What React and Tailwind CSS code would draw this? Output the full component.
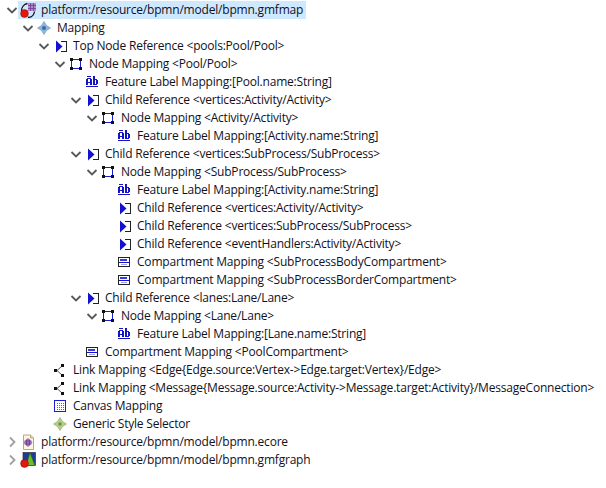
import React from "react";

const Chev = ({ open }) => (
  <svg width="16" height="16" viewBox="0 0 16 16" className="shrink-0" fill="none">
    {open ? (
      <path d="M3.5 6 L8 10.5 L12.5 6" stroke="#585858" strokeWidth="1.8" />
    ) : (
      <path d="M6 3.5 L10.5 8 L6 12.5" stroke="#a0a0a0" strokeWidth="1.8" />
    )}
  </svg>
);

const S = ({ children }) => (
  <svg width="16" height="16" viewBox="0 0 16 16" className="shrink-0" fill="none" shapeRendering="crispEdges">
    {children}
  </svg>
);

const Gmfmap = () => (
  <S>
    <g shapeRendering="geometricPrecision">
      <rect x="8" y="1" width="8" height="8" fill="#b08cc8" />
      <path d="M10.5 1v8M13.5 1v8M8 3.5h8M8 6.5h8" stroke="#7a3fa0" strokeWidth="0.9" />
      <path d="M1.5 9 A7.5 7.5 0 0 1 7.5 1.5" stroke="#111" strokeWidth="1.3" />
      <path d="M14.5 9.5 A7 7 0 0 1 8 15.5" stroke="#111" strokeWidth="1.3" />
      <circle cx="4.5" cy="11.5" r="3.9" fill="#e4170c" stroke="#8a1008" strokeWidth="0.5" />
    </g>
  </S>
);
const Diamond = () => (
  <S>
    <g shapeRendering="geometricPrecision">
      <path d="M8 1.5 L10.5 5.5 L14.5 8 L10.5 10.5 L8 14.5 L5.5 10.5 L1.5 8 L5.5 5.5 Z" fill="#8fb6dc" stroke="#6f94b8" strokeWidth="0.6" />
      <rect x="6.3" y="6.3" width="3.4" height="3.4" fill="#2f68b0" />
    </g>
  </S>
);
const ChildRef = () => (
  <S>
    <path d="M9 3.5h5.5v10h-5.5" stroke="#222" strokeWidth="1" />
    <g shapeRendering="geometricPrecision">
      <path d="M4 2.5 L10.5 8.5 L4 14.5 Z" fill="#1212d0" />
    </g>
  </S>
);
const NodeMap = () => (
  <S>
    <rect x="3.5" y="3.5" width="9" height="9" stroke="#1c1cd0" />
    <rect x="2" y="2" width="3" height="3" fill="#111" />
    <rect x="11" y="2" width="3" height="3" fill="#111" />
    <rect x="2" y="11" width="3" height="3" fill="#111" />
    <rect x="11" y="11" width="3" height="3" fill="#111" />
  </S>
);
const AbIcon = () => (
  <S>
    <g fill="#1414c4">
      <rect x="3" y="2" width="4" height="1" />
      <rect x="3" y="4" width="4" height="1" />
      <rect x="2" y="5" width="2" height="6" />
      <rect x="6" y="5" width="2" height="6" />
      <rect x="4" y="8" width="2" height="1" />
      <rect x="9" y="2" width="2" height="9" />
      <rect x="11" y="5" width="2" height="1" />
      <rect x="11" y="10" width="2" height="1" />
      <rect x="12" y="6" width="2" height="4" />
      <rect x="2" y="12" width="12" height="1" />
    </g>
  </S>
);
const Compartment = () => (
  <S>
    <rect x="2.5" y="3.5" width="11" height="9" stroke="#222" />
    <rect x="3" y="8" width="10" height="1" fill="#1414c8" />
    <rect x="4" y="5" width="7" height="2" fill="#3a3ad8" />
    <rect x="5" y="10" width="6" height="1" fill="#a0a0e0" />
  </S>
);
const LinkIcon = () => (
  <S>
    <g shapeRendering="geometricPrecision">
      <path d="M5 8.5 L10 4 M5 8.5 L10 13" stroke="#555" strokeWidth="1" />
    </g>
    <rect x="9" y="2" width="3" height="3" fill="#111" />
    <rect x="2" y="7" width="3" height="3" fill="#111" />
    <rect x="9" y="12" width="3" height="3" fill="#111" />
  </S>
);
const Canvas = () => (
  <S>
    <rect x="2.5" y="2.5" width="11" height="11" stroke="#1c1cd0" fill="#fff" />
    <path d="M5 5h1M7 5h1M9 5h1M11 5h1M5 7h1M7 7h1M9 7h1M11 7h1M5 9h1M7 9h1M9 9h1M11 9h1M5 11h1M7 11h1M9 11h1M11 11h1" stroke="#666" />
  </S>
);
const Style = () => (
  <S>
    <g shapeRendering="geometricPrecision">
      <path d="M8 1.5 L10.5 5.5 L14.5 8 L10.5 10.5 L8 14.5 L5.5 10.5 L1.5 8 L5.5 5.5 Z" fill="#b4d08c" stroke="#84a85c" strokeWidth="0.6" />
      <rect x="6.5" y="6.5" width="3" height="3" fill="#6f8f3f" />
    </g>
  </S>
);
const Ecore = () => (
  <S>
    <g shapeRendering="geometricPrecision">
      <path d="M3.5 1h7l3 3v11.5h-10z" fill="#fdf6e0" stroke="#b8a878" />
      <path d="M10.5 1v3h3" stroke="#b8a878" fill="#ecdcb0" />
      <path d="M8 4 L12.5 8.5 L8 13 L3.5 8.5 Z" fill="#a070c0" />
      <path d="M6.5 5.5v6M9.5 5.5v6M4.5 7h7M4.5 10h7" stroke="#6d3f90" strokeWidth="0.8" />
    </g>
  </S>
);
const Graph = () => (
  <S>
    <g shapeRendering="geometricPrecision">
      <rect x="3" y="0.5" width="12.5" height="13" fill="#1c3c9c" stroke="#222" strokeWidth="0.6" />
      <path d="M10 0.5 L15 13.5 H6 Z" fill="#6fbb28" stroke="#2c5c10" strokeWidth="0.6" />
      <circle cx="4.5" cy="11.5" r="3.9" fill="#e4170c" stroke="#7a1008" strokeWidth="0.5" />
    </g>
  </S>
);

const rows = [
  [0, "open", Gmfmap, "platform:/resource/bpmn/model/bpmn.gmfmap", true],
  [1, "open", Diamond, "Mapping"],
  [2, "open", ChildRef, "Top Node Reference <pools:Pool/Pool>"],
  [3, "open", NodeMap, "Node Mapping <Pool/Pool>"],
  [4, null, AbIcon, "Feature Label Mapping:[Pool.name:String]"],
  [4, "open", ChildRef, "Child Reference <vertices:Activity/Activity>"],
  [5, "open", NodeMap, "Node Mapping <Activity/Activity>"],
  [6, null, AbIcon, "Feature Label Mapping:[Activity.name:String]"],
  [4, "open", ChildRef, "Child Reference <vertices:SubProcess/SubProcess>"],
  [5, "open", NodeMap, "Node Mapping <SubProcess/SubProcess>"],
  [6, null, AbIcon, "Feature Label Mapping:[Activity.name:String]"],
  [6, null, ChildRef, "Child Reference <vertices:Activity/Activity>"],
  [6, null, ChildRef, "Child Reference <vertices:SubProcess/SubProcess>"],
  [6, null, ChildRef, "Child Reference <eventHandlers:Activity/Activity>"],
  [6, null, Compartment, "Compartment Mapping <SubProcessBodyCompartment>"],
  [6, null, Compartment, "Compartment Mapping <SubProcessBorderCompartment>"],
  [4, "open", ChildRef, "Child Reference <lanes:Lane/Lane>"],
  [5, "open", NodeMap, "Node Mapping <Lane/Lane>"],
  [6, null, AbIcon, "Feature Label Mapping:[Lane.name:String]"],
  [4, null, Compartment, "Compartment Mapping <PoolCompartment>"],
  [2, null, LinkIcon, "Link Mapping <Edge{Edge.source:Vertex->Edge.target:Vertex}/Edge>"],
  [2, null, LinkIcon, "Link Mapping <Message{Message.source:Activity->Message.target:Activity}/MessageConnection>"],
  [2, null, Canvas, "Canvas Mapping"],
  [2, null, Style, "Generic Style Selector"],
  [0, "closed", Ecore, "platform:/resource/bpmn/model/bpmn.ecore"],
  [0, "closed", Graph, "platform:/resource/bpmn/model/bpmn.gmfgraph"],
];

const indents = ["pl-[4px]", "pl-[20px]", "pl-[36px]", "pl-[52px]", "pl-[68px]", "pl-[84px]", "pl-[100px]"];

export default function App() {
  return (
    <div className="w-[606px] h-[488px] bg-white overflow-hidden pt-[1px] text-[12px] tracking-[-0.2px] text-[#111122] font-['Open_Sans','Noto_Sans',sans-serif]">
      {rows.map(([d, state, Icon, label, sel], i) => (
        <div key={i} className={`flex items-center h-[18px] whitespace-nowrap ${indents[d]}`}>
          {state ? <Chev open={state === "open"} /> : <span className="w-4 h-4 shrink-0" />}
          <div className={`flex items-center h-[18px] pl-[2px] -ml-[2px] ${sel ? "bg-[#cde8ff]" : ""}`}>
            <Icon />
            <span className="ml-[2px] pl-[3px] pr-[3px] leading-[18px]">{label}</span>
          </div>
        </div>
      ))}
    </div>
  );
}
